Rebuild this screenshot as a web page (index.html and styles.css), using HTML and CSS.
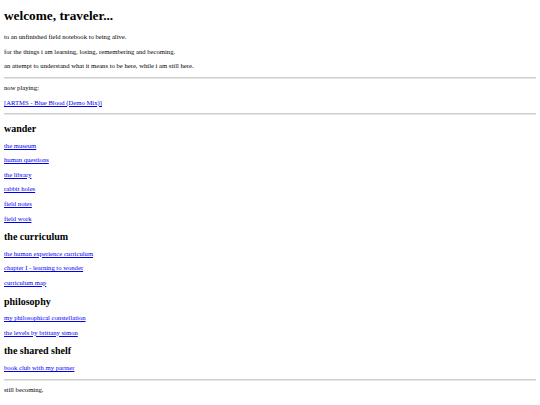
FILE: index.html
```html
<!DOCTYPE html>
<html lang="en">
<head>
<meta charset="utf-8">
<title>welcome, traveler...</title>
<link rel="stylesheet" href="styles.css">
</head>
<body class="page">
<h1 class="title">welcome, traveler...</h1>
<p class="line">to an unfinished field notebook to being alive.</p>
<p class="line">for the things i am learning, losing, remembering and becoming.</p>
<p class="line">an attempt to understand what it means to be here, while i am still here.</p>
<hr class="rule">
<p class="line">now playing:</p>
<p class="line"><a class="link" href="#">[ARTMS - Blue Blood (Demo Mix)]</a></p>
<hr class="rule">
<h2 class="section">wander</h2>
<p class="line"><a class="link" href="#">the museum</a></p>
<p class="line"><a class="link" href="#">human questions</a></p>
<p class="line"><a class="link" href="#">the library</a></p>
<p class="line"><a class="link" href="#">rabbit holes</a></p>
<p class="line"><a class="link" href="#">field notes</a></p>
<p class="line"><a class="link" href="#">field work</a></p>
<h2 class="section">the curriculum</h2>
<p class="line"><a class="link" href="#">the human experience curriculum</a></p>
<p class="line"><a class="link" href="#">chapter I - learning to wonder</a></p>
<p class="line"><a class="link" href="#">curriculum map</a></p>
<h2 class="section">philosophy</h2>
<p class="line"><a class="link" href="#">my philosophical constellation</a></p>
<p class="line"><a class="link" href="#">the levels by brittany simon</a></p>
<h2 class="section">the shared shelf</h2>
<p class="line"><a class="link" href="#">book club with my partner</a></p>
<hr class="rule">
<p class="line">still becoming.</p>
</body>
</html>
```
FILE: styles.css
```css
.page {
  margin: 4px;
  font-family: "Liberation Serif", "Times New Roman", serif;
  font-size: 6.65px;
  color: #000;
  background: #fff;
}
.title {
  font-size: 13.3px;
  line-height: 15px;
  font-weight: bold;
  margin: 4px 0 10px;
}
.section {
  font-size: 10px;
  line-height: 11px;
  font-weight: bold;
  margin: 8.75px 0 7.65px;
}
.line {
  margin: 6.65px 0;
  line-height: 7.9px;
}
.link {
  color: #0000ee;
  text-decoration: underline;
}
.rule {
  margin: 3.3px 0 -1px;
  border: 0;
  border-top: 1px solid #cfcfcf;
  border-bottom: 1px solid #e6e6e6;
  height: 0;
}
```
